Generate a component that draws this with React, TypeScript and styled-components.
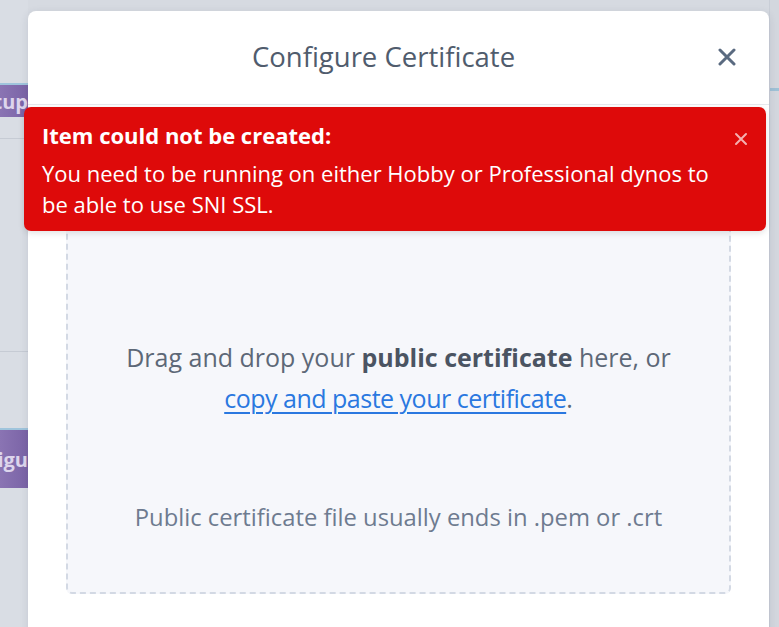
import React from "react";
import styled, { createGlobalStyle } from "styled-components";

const Global = createGlobalStyle`
  html, body { margin: 0; padding: 0; }
  body {
    width: 779px;
    height: 627px;
    overflow: hidden;
    background: #d6dae1;
    font-family: "Open Sans", "Noto Sans", sans-serif;
  }
`;

const Page = styled.div`
  position: relative;
  width: 779px;
  height: 627px;
  overflow: hidden;
  background: #d6dae1;
`;

const Backdrop = styled.div`
  display: flex;
  flex-direction: column;
  width: 28px;
  height: 100%;
  background: #d9dde4;
`;

const BgButton = styled.div<{ $top: number; $h: number }>`
  margin-top: ${(p) => p.$top}px;
  height: ${(p) => p.$h}px;
  display: flex;
  align-items: center;
  justify-content: flex-end;
  overflow: hidden;
  white-space: nowrap;
  background: linear-gradient(90deg, #8a74b3, #7a63a6);
  border-top: 2px solid #9fc4dc;
  color: #ddd5ec;
  font-weight: 700;
  font-size: 20px;
`;

const BgRule = styled.div<{ $top: number }>`
  margin-top: ${(p) => p.$top}px;
  height: 1px;
  background: #c6cbd4;
`;

const RightEdge = styled.div`
  position: absolute;
  right: 0;
  top: 0;
  width: 9px;
  height: 100%;
  border-left: 1px solid #c9ced7;
  background: #d3d7de;
  &::after {
    content: "";
    position: absolute;
    left: 0;
    right: 0;
    top: 88px;
    height: 3px;
    background: #9fc1d6;
  }
`;

const Modal = styled.div`
  position: absolute;
  left: 28px;
  top: 11px;
  width: 741px;
  height: 640px;
  background: #ffffff;
  border-radius: 8px;
  box-shadow: 0 2px 8px rgba(40, 50, 70, 0.12);
  display: flex;
  flex-direction: column;
`;

const Header = styled.div`
  position: relative;
  height: 94px;
  box-sizing: border-box;
  padding: 0 30px 2px 0;
  flex-shrink: 0;
  display: flex;
  align-items: center;
  justify-content: center;
  border-bottom: 1px solid #e6e9ee;
`;

const Title = styled.h2`
  margin: 0;
  font-weight: 400;
  font-size: 27.5px;
  line-height: 36px;
  color: #505c6d;
`;

const CloseBtn = styled.button`
  position: absolute;
  right: 30px;
  top: 34px;
  width: 24px;
  height: 24px;
  padding: 0;
  border: none;
  background: transparent;
  display: flex;
  align-items: center;
  justify-content: center;
`;

const Body = styled.div`
  padding: 36px 38px 0 38px;
`;

const DropZone = styled.div`
  height: 453px;
  box-sizing: border-box;
  border: 2px dashed #d3d9e4;
  border-radius: 6px;
  background: #f6f7fb;
  display: flex;
  flex-direction: column;
  align-items: center;
  padding-top: 194px;
  text-align: center;
`;

const DropText = styled.p`
  margin: 0;
  font-size: 25px;
  line-height: 41px;
  color: #5d6877;
  b {
    font-weight: 700;
    color: #4b5462;
  }
`;

const Link = styled.a`
  color: #2a78e0;
  letter-spacing: -0.5px;
  text-decoration: underline;
  text-decoration-thickness: 1.5px;
  text-underline-offset: 4px;
  cursor: pointer;
`;

const Hint = styled.p`
  margin: 82px 0 0 0;
  font-size: 23.8px;
  line-height: 32px;
  color: #6e7b90;
`;

const Toast = styled.div`
  position: absolute;
  left: 24px;
  top: 107px;
  width: 742px;
  height: 124px;
  box-sizing: border-box;
  background: #de0a0a;
  border-radius: 7px;
  padding: 13px 56px 0 18px;
  color: #fff;
  box-shadow: 0 2px 6px rgba(0, 0, 0, 0.12);
`;

const ToastTitle = styled.div`
  font-weight: 700;
  font-size: 22px;
  line-height: 30px;
  margin-bottom: 8px;
`;

const ToastBody = styled.div`
  font-size: 22px;
  line-height: 31px;
`;

const ToastClose = styled.button`
  position: absolute;
  right: 17px;
  top: 24px;
  width: 16px;
  height: 16px;
  padding: 0;
  border: none;
  background: transparent;
  display: flex;
  align-items: center;
  justify-content: center;
`;

export default function App() {
  return (
    <>
      <Global />
      <Page>
        <Backdrop>
          <BgButton $top={83} $h={32}>Setup</BgButton>
          <BgRule $top={21} />
          <BgRule $top={212} />
          <BgButton $top={76} $h={58}>Configu</BgButton>
        </Backdrop>
        <RightEdge />
        <Modal>
          <Header>
            <Title>Configure Certificate</Title>
            <CloseBtn aria-label="Close">
              <svg width="18" height="18" viewBox="0 0 18 18">
                <path d="M2 2 L16 16 M16 2 L2 16" stroke="#5a6a80" strokeWidth="3" strokeLinecap="round" />
              </svg>
            </CloseBtn>
          </Header>
          <Body>
            <DropZone>
              <DropText>
                Drag and drop your <b>public certificate</b> here, or
                <br />
                <Link>copy and paste your certificate</Link>.
              </DropText>
              <Hint>Public certificate file usually ends in .pem or .crt</Hint>
            </DropZone>
          </Body>
        </Modal>
        <Toast>
          <ToastTitle>Item could not be created:</ToastTitle>
          <ToastBody>
            You need to be running on either Hobby or Professional dynos to
            <br />
            be able to use SNI SSL.
          </ToastBody>
          <ToastClose aria-label="Dismiss">
            <svg width="14" height="14" viewBox="0 0 14 14">
              <path d="M2 2 L12 12 M12 2 L2 12" stroke="#f4b0b0" strokeWidth="2" strokeLinecap="round" />
            </svg>
          </ToastClose>
        </Toast>
      </Page>
    </>
  );
}
